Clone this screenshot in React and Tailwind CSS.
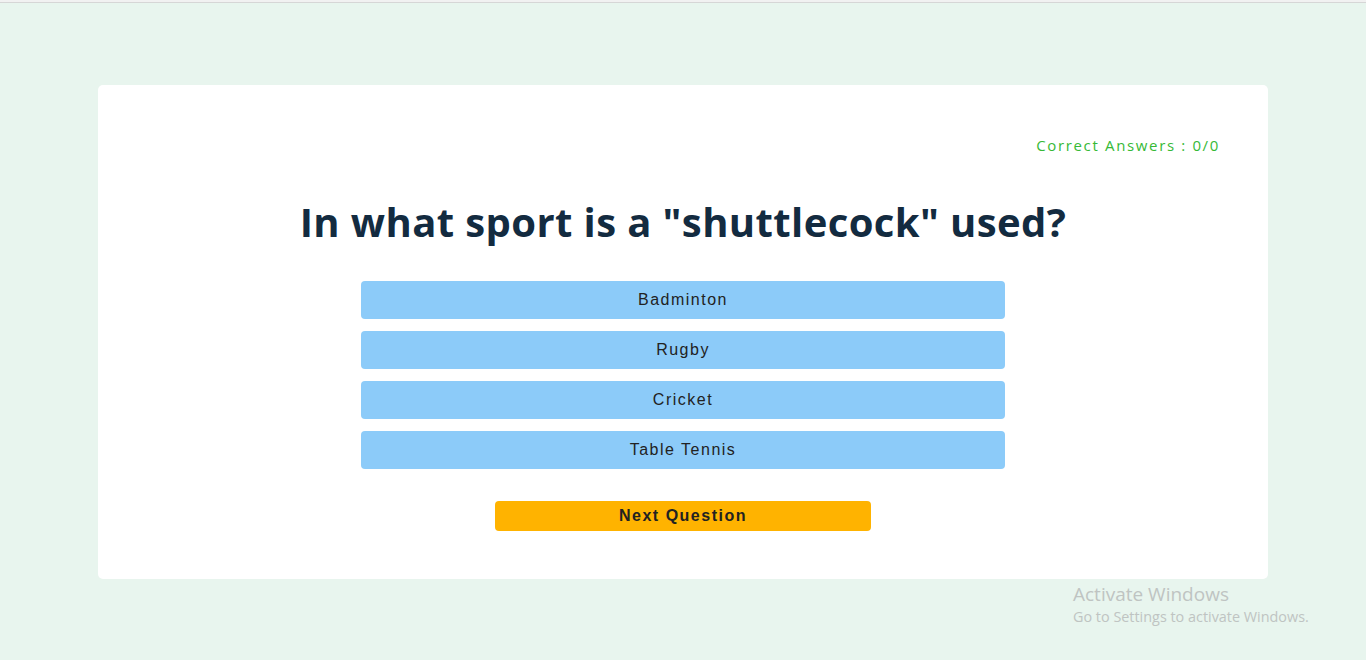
export default function App() {
    const options = ["Badminton", "Rugby", "Cricket", "Table Tennis"];

    return (
        <div className="relative min-h-[660px] bg-[#e8f5ee] overflow-hidden">
            {/* browser top line */}
            <div className="h-[2px] bg-[#f1f1f1]"></div>
            <div className="h-px bg-[#d6d6d6]"></div>

            <div className="pt-[82px] flex justify-center">
                <div className="w-[1170px] bg-white rounded-[5px] pt-[50px] pb-[48px] px-[48px]">
                    <div className="flex justify-end">
                        <p className="text-[15px] leading-5 tracking-[1.65px] text-[#36b936]" style={{fontFamily: '"Open Sans", sans-serif'}}>
                            Correct Answers : 0/0
                        </p>
                    </div>

                    <h1 className="mt-[42px] text-center text-[40px] leading-[49px] font-bold tracking-[0.4px] text-[#132b40]"
                        style={{fontFamily: '"Open Sans", sans-serif'}}>
                        In what sport is a "shuttlecock" used?
                    </h1>

                    <div className="mt-[35px] flex flex-col items-center gap-3">
                        {options.map((opt) => (
                            <button key={opt}
                                    className="w-[644px] h-[38px] rounded-[4px] bg-[#8ccbf9] text-[16px] tracking-[1.5px] text-[#222]"
                                    style={{fontFamily: '"Liberation Sans", Arial, sans-serif'}}>
                                {opt}
                            </button>
                        ))}
                    </div>

                    <div className="mt-[32px] flex justify-center">
                        <button className="w-[376px] h-[30px] rounded-[4px] bg-[#ffb300] text-[16px] font-bold tracking-[1.5px] text-[#222]"
                                style={{fontFamily: '"Liberation Sans", Arial, sans-serif'}}>
                            Next Question
                        </button>
                    </div>
                </div>
            </div>

            {/* windows watermark */}
            <div className="absolute left-[1073px] top-[582px] text-[#bfc4c2] pointer-events-none"
                 style={{fontFamily: '"Open Sans", sans-serif'}}>
                <p className="text-[19px] leading-6">Activate Windows</p>
                <p className="text-[14.4px] leading-5 mt-px">Go to Settings to activate Windows.</p>
            </div>
        </div>
    );
}
